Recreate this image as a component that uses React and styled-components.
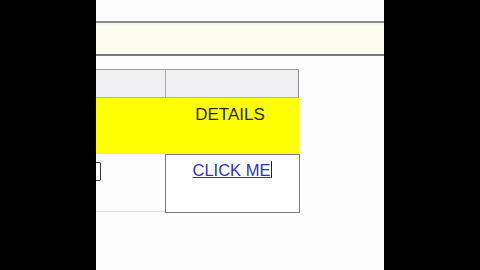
import React from "react";
import styled, { createGlobalStyle } from "styled-components";

const Global = createGlobalStyle`
  html, body { margin: 0; padding: 0; background: #000; }
  body { font-family: "Liberation Sans", Arial, sans-serif; }
`;

const Screen = styled.div`
  width: 480px;
  height: 270px;
  background: #000;
  display: flex;
  justify-content: center;
  overflow: hidden;
`;

const Page = styled.div`
  width: 288px;
  height: 270px;
  background: #fdfdfd;
  display: flex;
  flex-direction: column;
  padding-top: 21px;
  box-sizing: border-box;
`;

const Banner = styled.div`
  height: 31px;
  border-top: 2px solid #8c8c8c;
  border-bottom: 2px solid #7a7a7a;
  background: linear-gradient(#f4f4f8 0, #fdfdef 3px, #fdfdee 100%);
`;

const Table = styled.div`
  margin-top: 13px;
  display: grid;
  grid-template-columns: 69px 134px;
  grid-template-rows: 29px 56px 58px;
  width: 203px;
`;

const HeadCell = styled.div`
  background: #f0f0f2;
  border-top: 1px solid #9c9c9c;
  border-bottom: 1px solid #b0b0a0;
  border-left: ${(p) => (p.$divider ? "1px solid #a8a8a8" : "none")};
  border-right: ${(p) => (p.$last ? "1px solid #8e8e8e" : "none")};
  box-sizing: border-box;
`;

const YellowCell = styled.div`
  background: #ffff00;
  display: flex;
  justify-content: center;
  align-items: flex-start;
  padding-top: 7px;
  padding-right: 4px;
  box-sizing: border-box;
  font-size: 17px;
  color: #2a2a10;
`;

const BodyCell = styled.div`
  border-bottom: 1px solid #dcdcdc;
  box-sizing: border-box;
  padding-top: 8px;
`;

const InputStub = styled.div`
  width: 4px;
  height: 17px;
  border: 1px solid #333;
  border-left: none;
  border-radius: 0 2px 2px 0;
`;

const LinkCell = styled.div`
  width: 135px;
  height: 59px;
  border: 1px solid #7a7a7a;
  box-sizing: border-box;
  display: flex;
  justify-content: center;
  align-items: flex-start;
  padding-top: 6px;
  background: #fff;
`;

const Link = styled.a`
  font-size: 16.5px;
  color: #3030c0;
  text-decoration: underline;
  cursor: pointer;
`;

const Caret = styled.span`
  display: inline-block;
  width: 1px;
  height: 17px;
  background: #222;
  margin-left: 1px;
  vertical-align: -3px;
`;

export default function App() {
  return (
    <>
      <Global />
      <Screen>
        <Page>
          <Banner />
          <Table>
            <HeadCell />
            <HeadCell $divider $last />
            <YellowCell />
            <YellowCell>DETAILS</YellowCell>
            <BodyCell>
              <InputStub />
            </BodyCell>
            <LinkCell>
              <Link>CLICK ME</Link>
              <Caret />
            </LinkCell>
          </Table>
        </Page>
      </Screen>
    </>
  );
}
